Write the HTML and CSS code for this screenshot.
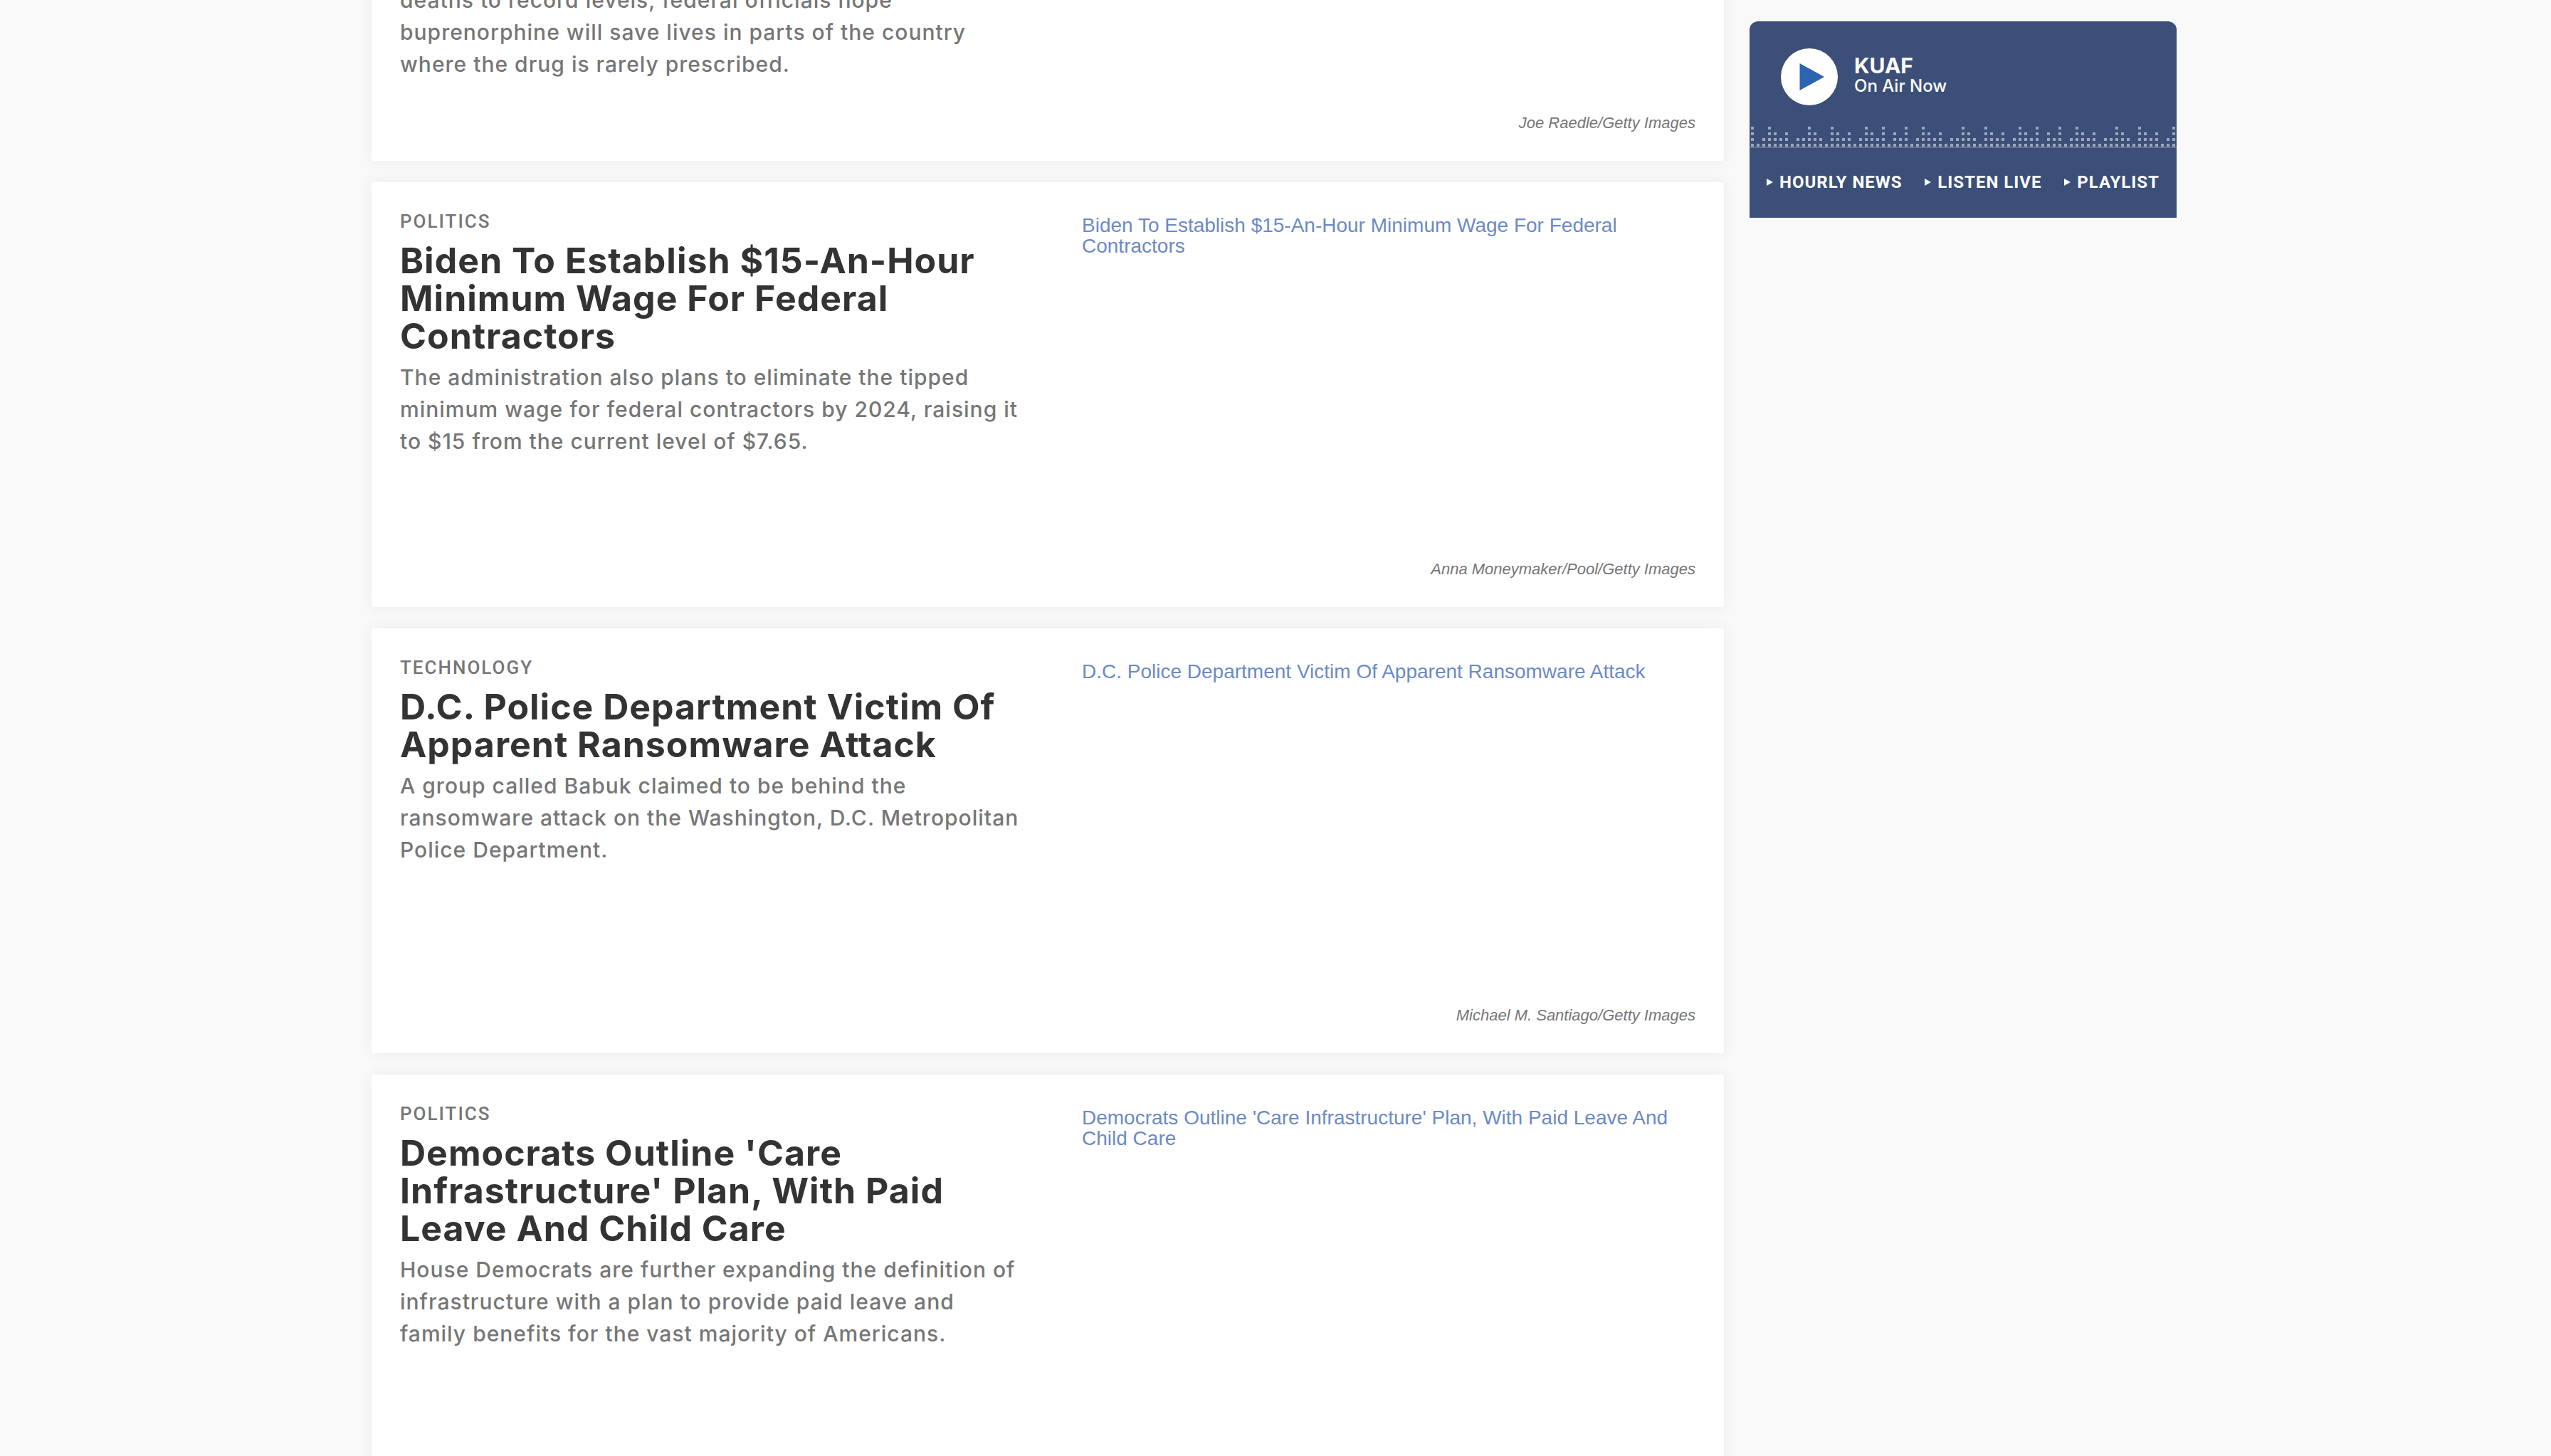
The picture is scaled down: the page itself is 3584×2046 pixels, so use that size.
FILE: index.html
```html
<!DOCTYPE html>
<html lang="en">
<head>
<meta charset="utf-8">
<meta name="viewport" content="width=device-width, initial-scale=1">
<title>KUAF News</title>
<link rel="stylesheet" href="styles.css">
</head>
<body>
<div class="page">
  <main class="feed">
    <article class="card card--continued">
      <div class="card__text">
        <p class="card__summary">deaths to record levels, federal officials hope buprenorphine will save lives in parts of the country where the drug is rarely prescribed.</p>
      </div>
      <figure class="card__figure">
        <figcaption class="card__credit">Joe Raedle/Getty Images</figcaption>
      </figure>
    </article>

    <article class="card">
      <div class="card__text">
        <a class="card__topic" href="#politics">POLITICS</a>
        <h2 class="card__title"><a href="#wage">Biden To Establish $15-An-Hour Minimum Wage For Federal Contractors</a></h2>
        <p class="card__summary">The administration also plans to eliminate the tipped minimum wage for federal contractors by 2024, raising it to $15 from the current level of $7.65.</p>
      </div>
      <figure class="card__figure">
        <a class="card__media" href="#wage">Biden To Establish $15-An-Hour Minimum Wage For Federal Contractors</a>
        <figcaption class="card__credit">Anna Moneymaker/Pool/Getty Images</figcaption>
      </figure>
    </article>

    <article class="card">
      <div class="card__text">
        <a class="card__topic" href="#technology">TECHNOLOGY</a>
        <h2 class="card__title"><a href="#ransomware">D.C. Police Department Victim Of Apparent Ransomware Attack</a></h2>
        <p class="card__summary">A group called Babuk claimed to be behind the ransomware attack on the Washington, D.C. Metropolitan Police Department.</p>
      </div>
      <figure class="card__figure">
        <a class="card__media" href="#ransomware">D.C. Police Department Victim Of Apparent Ransomware Attack</a>
        <figcaption class="card__credit">Michael M. Santiago/Getty Images</figcaption>
      </figure>
    </article>

    <article class="card">
      <div class="card__text">
        <a class="card__topic" href="#politics">POLITICS</a>
        <h2 class="card__title"><a href="#care">Democrats Outline 'Care Infrastructure' Plan, With Paid Leave And Child Care</a></h2>
        <p class="card__summary">House Democrats are further expanding the definition of infrastructure with a plan to provide paid leave and family benefits for the vast majority of Americans.</p>
      </div>
      <figure class="card__figure">
        <a class="card__media" href="#care">Democrats Outline 'Care Infrastructure' Plan, With Paid Leave And Child Care</a>
      </figure>
    </article>
  </main>

  <aside class="player">
    <div class="player__now">
      <button class="player__play" type="button" aria-label="Play KUAF">
        <svg width="80" height="80" viewBox="0 0 80 80" aria-hidden="true">
          <circle cx="40" cy="40" r="40" fill="#fff"/>
          <path d="M26.500 21v38L61 40z" fill="#2c64b0"/>
        </svg>
      </button>
      <div>
        <p class="player__station">KUAF</p>
        <p class="player__status">On Air Now</p>
      </div>
    </div>
    <svg class="player__bars" width="100%" height="30" aria-hidden="true">
      <defs>
        <pattern id="bars" x="2" y="0" width="216" height="32" patternUnits="userSpaceOnUse">
          <g stroke="#9da7bb" stroke-width="4" stroke-dasharray="4">
            <path d="M2 28v-28M26 28v-28M82 28v-28M114 28v-28M162 28v-28M186 28v-28"/>
            <path d="M34 28v-20M50 28v-20M90 28v-20M122 28v-20M138 28v-20M170 28v-20M202 28v-20"/>
            <path d="M18 28v-12M42 28v-12M66 28v-12M74 28v-12M98 28v-12M130 28v-12M154 28v-12M178 28v-12M210 28v-12"/>
            <path d="M10 28v-4M58 28v-4M106 28v-4M146 28v-4M194 28v-4"/>
          </g>
        </pattern>
      </defs>
      <rect width="100%" height="28" fill="url(#bars)"/>
      <rect y="28" width="100%" height="2" fill="#627397"/>
    </svg>
    <nav class="player__links">
      <a href="#hourly">HOURLY NEWS</a>
      <a href="#live">LISTEN LIVE</a>
      <a href="#playlist">PLAYLIST</a>
    </nav>
  </aside>
</div>
</body>
</html>
```
FILE: styles.css
```css
* { box-sizing: border-box; }

body {
  margin: 0;
  height: 100vh;
  overflow: hidden;
  background: #f9f9f9;
  color: #767676;
  font-family: Inter, "Open Sans", sans-serif;
}

a { color: inherit; text-decoration: none; }
p, h2, figure { margin: 0; }

.page {
  display: grid;
  grid-template-columns: minmax(0, 1fr) 600px;
  gap: 36px;
  align-items: start;
  max-width: 2540px;
  margin: 0 auto;
  padding-right: 4px;
}

.feed {
  display: grid;
  gap: 30px;
  margin-top: -22px;
}

.card {
  display: grid;
  grid-template-columns: minmax(0, 876fr) minmax(0, 862fr);
  gap: 82px;
  padding: 40px 40px 39px;
  border-radius: 4px;
  background: #fff;
  box-shadow: 0 0 20px rgba(0, 0, 0, 0.06);
}

.card--continued {
  min-height: 248px;
  padding-top: 0;
}

.card__topic {
  display: block;
  font: 500 26px/30px Roboto, sans-serif;
  letter-spacing: 2px;
}

.card__title {
  margin-top: 14px;
  color: #333;
  font-size: 50px;
  font-weight: 700;
  line-height: 53px;
  letter-spacing: 1px;
}

.card__summary {
  margin-top: 9px;
  font-size: 30px;
  font-weight: 500;
  line-height: 45px;
  letter-spacing: 1px;
}

.card--continued .card__summary { margin-top: 0; }

.card__figure {
  display: flex;
  flex-direction: column;
  font-family: "Liberation Sans", Arial, sans-serif;
}

.card__media {
  aspect-ratio: 16 / 9;
  padding-top: 6px;
  color: #6c8ac6;
  font-size: 28px;
  line-height: 29px;
}

.card__credit {
  margin-top: auto;
  padding-top: 5px;
  font-size: 22px;
  font-style: italic;
  line-height: 28px;
  text-align: right;
}

.player {
  margin-top: 30px;
  border-radius: 12px 12px 0 0;
  background: #3b4f78;
  color: #fff;
}

.player__now {
  display: flex;
  gap: 23px;
  padding: 38px 44px 30px;
}

.player__play {
  width: 80px;
  height: 80px;
  padding: 0;
  border: 0;
  border-radius: 50%;
  background: none;
}

.player__play svg { display: block; }

.player__station {
  padding-top: 8px;
  font-size: 30px;
  font-weight: 700;
  line-height: 32px;
}

.player__status {
  font-size: 24px;
  font-weight: 500;
  line-height: 26px;
}

.player__bars { display: block; }

.player__links {
  display: flex;
  justify-content: space-between;
  padding: 34px 24px 36px;
  font: 700 24px/28px Roboto, sans-serif;
  letter-spacing: 1px;
}

.player__links a {
  display: flex;
  align-items: center;
  gap: 9px;
}

.player__links a::before {
  content: "";
  border: solid transparent;
  border-width: 5px 0 5px 9px;
  border-left-color: #fff;
}
```
